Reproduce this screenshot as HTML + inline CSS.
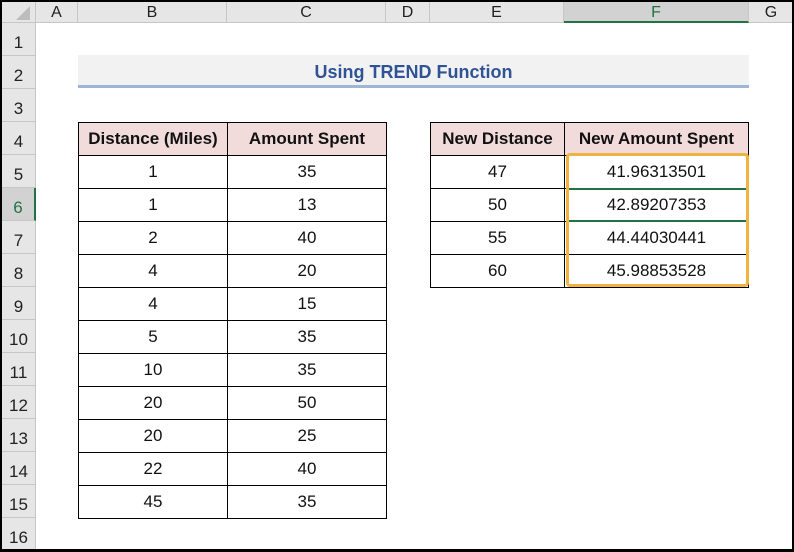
<!DOCTYPE html>
<html><head><meta charset="utf-8"><style>
*{margin:0;padding:0;box-sizing:border-box}
body{width:794px;height:552px;overflow:hidden;background:#000;position:relative;font-family:"Liberation Sans",Calibri,sans-serif}
#s{position:absolute;left:2px;top:2px;width:790px;height:547px;background:#fff;overflow:hidden}
.ch{position:absolute;top:0;height:21px;background:#e6e6e6;border-right:1px solid #c6c6c6;border-bottom:1px solid #c6c6c6;text-align:center;font-size:16px;line-height:21px;color:#222}
.rh{position:absolute;left:0;width:34px;height:33px;background:#e6e6e6;border-bottom:1px solid #c6c6c6;border-right:1px solid #c6c6c6;text-align:center;font-size:17px;line-height:40px;color:#222}
table{position:absolute;border-collapse:collapse}
td{border:1px solid #000;height:33px;text-align:center;font-size:17px;color:#111;padding:0}
th{border:1px solid #000;height:33px;text-align:center;font-size:17px;background:#f2dcdb;color:#111;font-weight:bold;padding:0}
</style></head><body><div id="s">
<div class="ch" style="left:0;width:34px"><svg width="34" height="21"><polygon points="28,4 28,18 14,18" fill="#bdbdbd"/></svg></div>
<div class="ch" style="left:34px;width:42px">A</div>
<div class="ch" style="left:76px;width:149px">B</div>
<div class="ch" style="left:225px;width:159px">C</div>
<div class="ch" style="left:384px;width:44px">D</div>
<div class="ch" style="left:428px;width:134px">E</div>
<div class="ch" style="left:562px;width:185px;background:#d2d2d2;border-bottom:2px solid #217346;color:#217346">F</div>
<div class="ch" style="left:747px;width:45px">G</div>

<div class="rh" style="top:21px">1</div>
<div class="rh" style="top:54px">2</div>
<div class="rh" style="top:87px">3</div>
<div class="rh" style="top:120px">4</div>
<div class="rh" style="top:153px">5</div>
<div class="rh" style="top:186px;background:#d2d2d2;color:#217346;border-right:2px solid #217346">6</div>
<div class="rh" style="top:219px">7</div>
<div class="rh" style="top:252px">8</div>
<div class="rh" style="top:285px">9</div>
<div class="rh" style="top:318px">10</div>
<div class="rh" style="top:351px">11</div>
<div class="rh" style="top:384px">12</div>
<div class="rh" style="top:417px">13</div>
<div class="rh" style="top:450px">14</div>
<div class="rh" style="top:483px">15</div>
<div class="rh" style="top:516px">16</div>

<div style="position:absolute;left:76px;top:53px;width:671px;height:33px;background:#f2f2f2;border-bottom:3px solid #9db5d7;text-align:center;font-weight:bold;font-size:18px;line-height:34px;color:#2f5496">Using TREND Function</div>

<table style="left:76px;top:120px;width:309px">
<tr><th style="width:149px">Distance (Miles)</th><th>Amount Spent</th></tr>
<tr><td>1</td><td>35</td></tr><tr><td>1</td><td>13</td></tr><tr><td>2</td><td>40</td></tr>
<tr><td>4</td><td>20</td></tr><tr><td>4</td><td>15</td></tr><tr><td>5</td><td>35</td></tr>
<tr><td>10</td><td>35</td></tr><tr><td>20</td><td>50</td></tr><tr><td>20</td><td>25</td></tr>
<tr><td>22</td><td>40</td></tr><tr><td>45</td><td>35</td></tr>
</table>
<table style="left:428px;top:120px;width:319px">
<tr><th style="width:134px">New Distance</th><th>New Amount Spent</th></tr>
<tr><td>47</td><td>41.96313501</td></tr><tr><td>50</td><td>42.89207353</td></tr>
<tr><td>55</td><td>44.44030441</td></tr><tr><td>60</td><td>45.98853528</td></tr>
</table>
<div style="position:absolute;left:564px;top:186px;width:182px;height:34px;border-top:2px solid #217346;border-bottom:2px solid #217346"></div>
<div style="position:absolute;left:564px;top:151px;width:183px;height:134px;border:3px solid #efb43f;border-radius:4px"></div>
</div></body></html>
